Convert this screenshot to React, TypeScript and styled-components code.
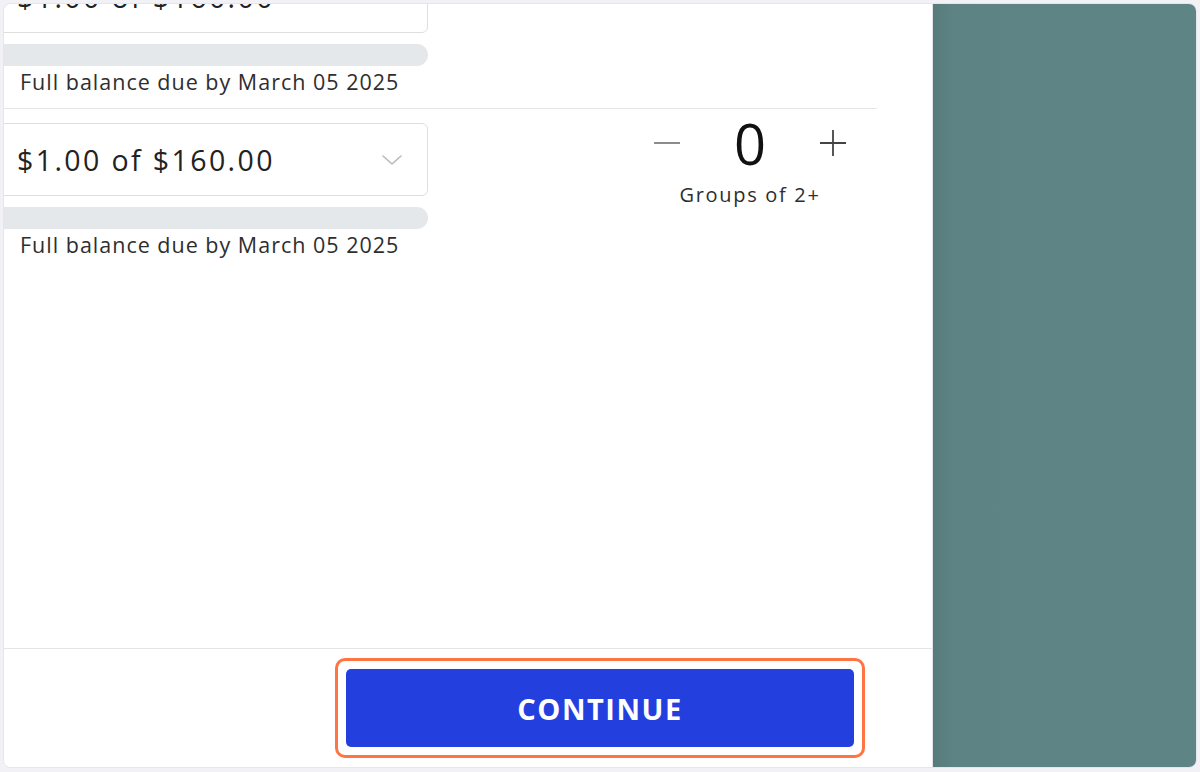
import React, { useState } from 'react';
import styled, { createGlobalStyle } from 'styled-components';

const GlobalStyle = createGlobalStyle`
  html, body {
    margin: 0;
    padding: 0;
    background-color: #f2f1f6;
  }
  body {
    font-family: "Open Sans", "Noto Sans", Arial, sans-serif;
    color: #222;
  }
  * {
    box-sizing: border-box;
  }
`;

const Frame = styled.div`
  width: 1200px;
  height: 772px;
  padding: 3px 3px 4px 3px;
`;

const Window = styled.div`
  display: flex;
  height: 100%;
  border: 1px solid #e6e5ec;
  border-radius: 8px;
  overflow: hidden;
  background-color: #fff;
`;

const Main = styled.main`
  flex: 1;
  display: flex;
  flex-direction: column;
  min-width: 0;
  background-color: #fff;
`;

const Scroll = styled.div`
  flex: 1;
  overflow: hidden;
  padding-right: 55px;
`;

const List = styled.div`
  margin-top: -58px;
`;

const Row = styled.div<{ $last?: boolean }>`
  display: flex;
  align-items: flex-start;
  padding: 14px 0;
  border-bottom: ${(p) => (p.$last ? 'none' : '1px solid #e6e6e8')};
`;

const PaymentColumn = styled.div`
  display: flex;
  flex-direction: column;
  width: 448px;
  margin-left: -24px;
`;

const Select = styled.div`
  display: flex;
  align-items: center;
  justify-content: space-between;
  height: 73px;
  padding: 0 24px 0 36px;
  border: 1.5px solid #dedede;
  border-radius: 6px;
  font-size: 28.5px;
  color: #222;
  letter-spacing: 2.4px;
  white-space: nowrap;
`;

const Chevron = styled.svg`
  width: 22px;
  height: 12px;
  color: #b9b9b9;
`;

const Progress = styled.div`
  height: 22px;
  margin-top: 11px;
  border-radius: 11px;
  background-color: #e5e8eb;
`;

const Note = styled.div`
  margin-top: 4px;
  padding-left: 40px;
  font-size: 21.5px;
  line-height: 24px;
  color: #2e2e2e;
  letter-spacing: 1px;
  white-space: nowrap;
`;

const Counter = styled.div`
  display: flex;
  flex-direction: column;
  align-items: center;
  width: 210px;
  margin-left: auto;
  margin-right: 22px;
`;

const Stepper = styled.div`
  display: grid;
  grid-template-columns: 44px 122px 44px;
  align-items: center;
  height: 52px;
  margin-top: -6px;
`;

const StepButton = styled.button<{ $disabled?: boolean }>`
  display: flex;
  align-items: center;
  justify-content: center;
  width: 44px;
  height: 44px;
  padding: 0;
  border: none;
  background: none;
  cursor: pointer;
  color: ${(p) => (p.$disabled ? '#8c8c8c' : '#444')};
`;

const Value = styled.div`
  text-align: center;
  font-size: 56px;
  line-height: 52px;
  color: #111;
`;

const CounterLabel = styled.div`
  margin-top: 13px;
  font-size: 20px;
  line-height: 26px;
  color: #2e2e2e;
  letter-spacing: 1.7px;
  white-space: nowrap;
`;

const Footer = styled.footer`
  display: flex;
  align-items: center;
  justify-content: flex-end;
  height: 119px;
  padding-right: 67px;
  border-top: 1px solid #e4e4e6;
`;

const FocusRing = styled.div`
  padding: 8px;
  border: 3px solid #ff7443;
  border-radius: 10px;
`;

const ContinueButton = styled.button`
  display: block;
  width: 508px;
  height: 78px;
  border: none;
  border-radius: 5px;
  background-color: #233fde;
  color: #fff;
  font-family: "Open Sans", "Noto Sans", Arial, sans-serif;
  font-size: 29px;
  font-weight: 700;
  letter-spacing: 1.5px;
  cursor: pointer;
`;

const Aside = styled.aside`
  width: 264px;
  flex-shrink: 0;
  border-left: 1px solid #e3e3e8;
  background: linear-gradient(to right, #587a7b 0px, #5e8385 20px, #5f8485 100%);
`;

const ChevronDown = () => (
  <Chevron viewBox="0 0 22 12" fill="none">
    <path d="M2 2l9 8 9-8" stroke="currentColor" strokeWidth="1.6" strokeLinecap="round" strokeLinejoin="round" />
  </Chevron>
);

const Minus = () => (
  <svg width="26" height="4" viewBox="0 0 26 4">
    <path d="M0 2h26" stroke="currentColor" strokeWidth="1.8" />
  </svg>
);

const Plus = () => (
  <svg width="26" height="26" viewBox="0 0 26 26">
    <path d="M0 13h26M13 0v26" stroke="currentColor" strokeWidth="1.8" />
  </svg>
);

const App: React.FC = () => {
  const [groups, setGroups] = useState(0);

  return (
    <>
      <GlobalStyle />
      <Frame>
        <Window>
          <Main>
            <Scroll>
              <List>
                <Row>
                  <PaymentColumn>
                    <Select>
                      <span>$1.00 of $160.00</span>
                      <ChevronDown />
                    </Select>
                    <Progress />
                    <Note>Full balance due by March 05 2025</Note>
                  </PaymentColumn>
                </Row>
                <Row $last>
                  <PaymentColumn>
                    <Select>
                      <span>$1.00 of $160.00</span>
                      <ChevronDown />
                    </Select>
                    <Progress />
                    <Note>Full balance due by March 05 2025</Note>
                  </PaymentColumn>
                  <Counter>
                    <Stepper>
                      <StepButton
                        $disabled={groups === 0}
                        onClick={() => setGroups((g) => Math.max(0, g - 1))}
                      >
                        <Minus />
                      </StepButton>
                      <Value>{groups}</Value>
                      <StepButton onClick={() => setGroups((g) => g + 1)}>
                        <Plus />
                      </StepButton>
                    </Stepper>
                    <CounterLabel>Groups of 2+</CounterLabel>
                  </Counter>
                </Row>
              </List>
            </Scroll>
            <Footer>
              <FocusRing>
                <ContinueButton type="button">CONTINUE</ContinueButton>
              </FocusRing>
            </Footer>
          </Main>
          <Aside />
        </Window>
      </Frame>
    </>
  );
};

export default App;
